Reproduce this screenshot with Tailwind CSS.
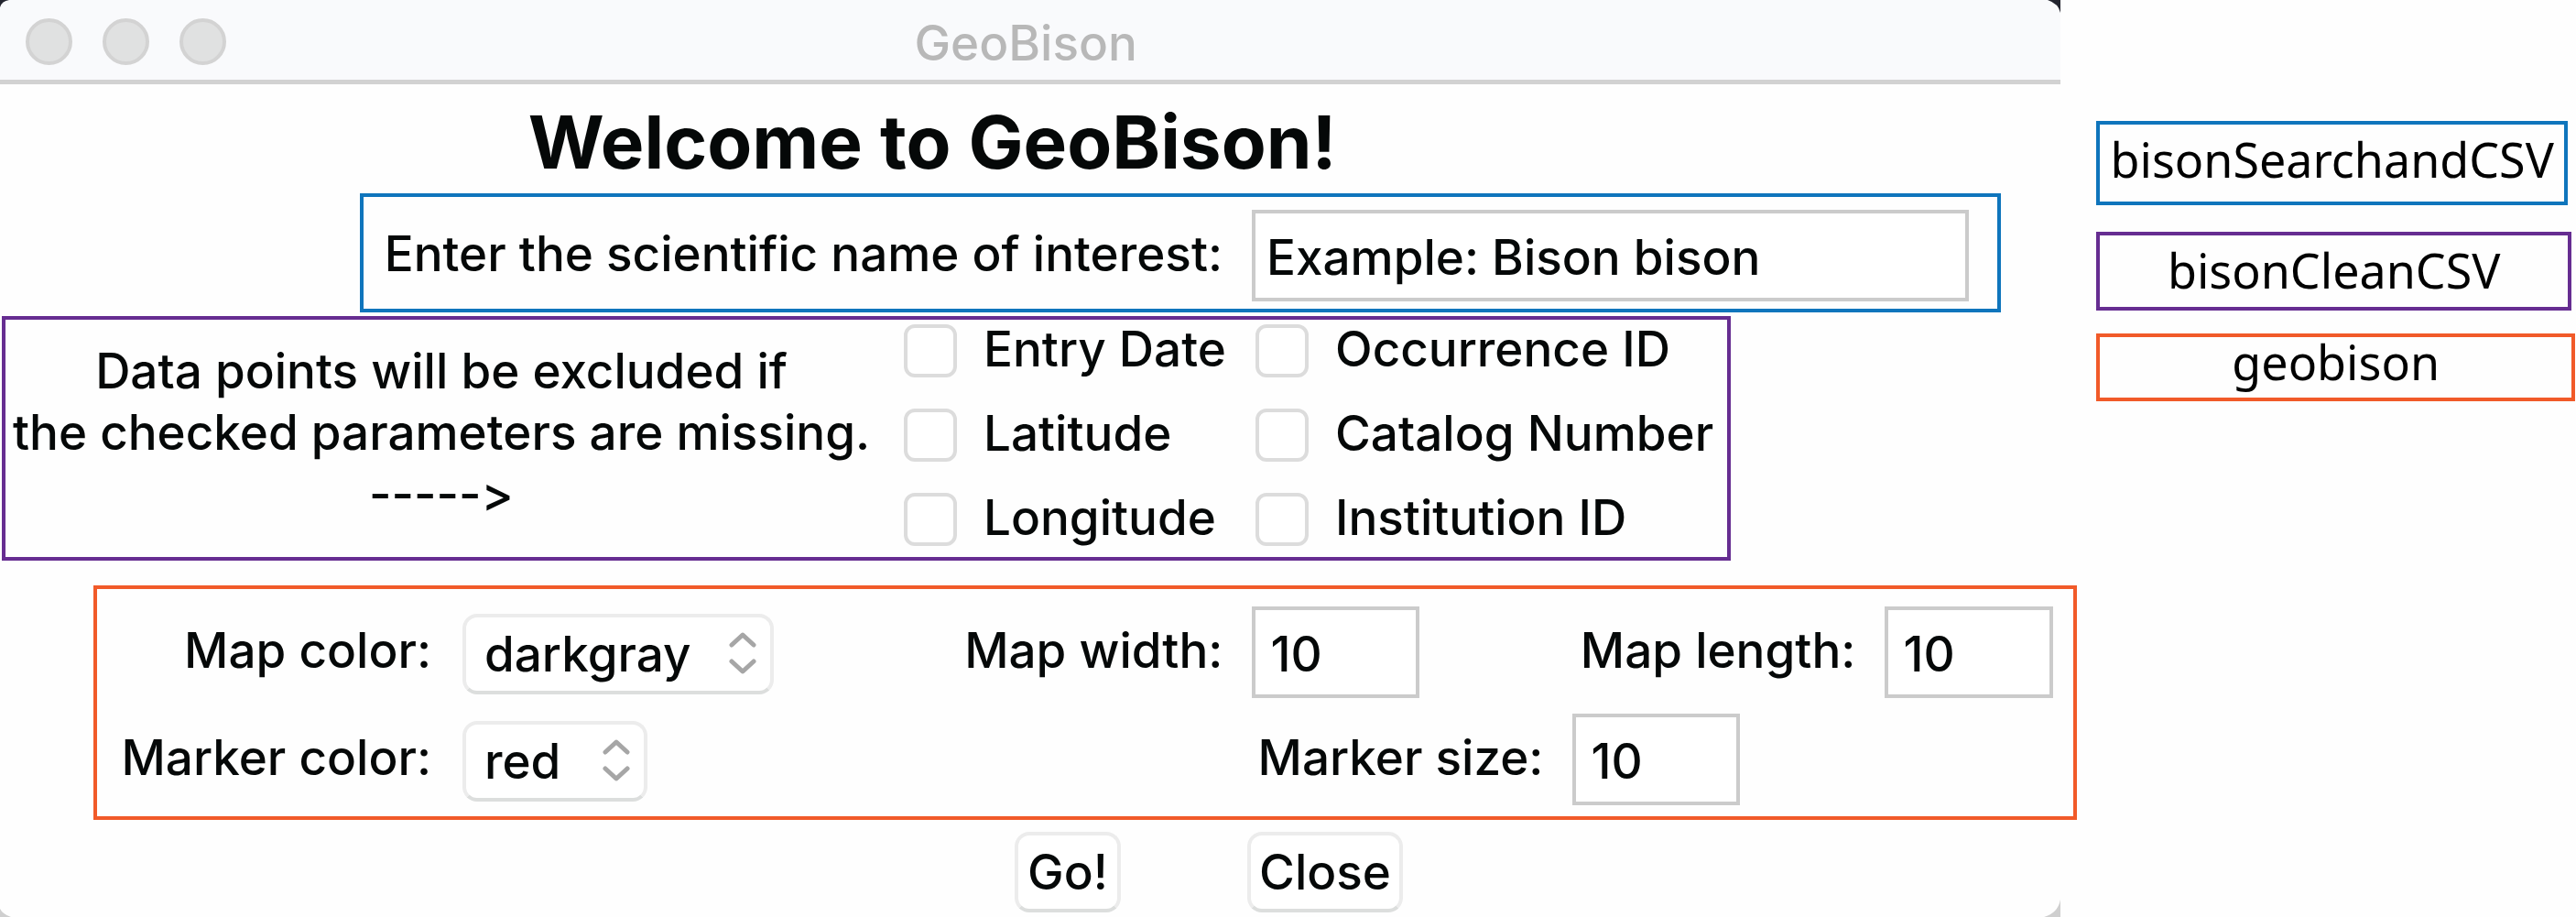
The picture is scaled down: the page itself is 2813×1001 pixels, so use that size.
<!DOCTYPE html>
<html lang="en">
<head>
<meta charset="utf-8">
<title>GeoBison</title>
<script src="https://cdn.jsdelivr.net/npm/@tailwindcss/browser@4"></script>
</head>
<body class="bg-[#fefefe] text-[#050808]">
<div class="grid min-h-screen grid-cols-[4fr_1fr] font-['Inter',sans-serif] text-[53px] [font-variant-ligatures:none]">

  <main class="relative min-w-0">
    <!-- window corners -->
    <svg class="absolute top-0 left-0 size-3" viewBox="0 0 12 12" aria-hidden="true"><path d="M0 0H10Q2 1 0 8Z" fill="#23252f"/></svg>
    <svg class="absolute top-0 right-0 size-5" viewBox="0 0 20 20" aria-hidden="true"><path d="M6 0H20V14Q18 4 6 0Z" fill="#23252f"/></svg>
    <svg class="absolute bottom-0 left-0 size-3" viewBox="0 0 12 12" aria-hidden="true"><path d="M0 3Q3 9 12 12H0Z" fill="#cfcfcf"/></svg>
    <svg class="absolute right-0 bottom-0 size-5" viewBox="0 0 20 20" aria-hidden="true"><path d="M20 1Q17 16 2 20H20Z" fill="#cfcfcf"/></svg>

    <header class="grid h-[92px] grid-cols-[1fr_auto_1fr] items-center border-b-5 border-[#d2d2d2] bg-[#f9fafc] pt-1 pr-[38px] pl-7">
      <div class="flex gap-[33px]">
        <span class="size-[51px] rounded-full border-4 border-[#d3d3d3] bg-[#e0e1e1]"></span>
        <span class="size-[51px] rounded-full border-4 border-[#d3d3d3] bg-[#e0e1e1]"></span>
        <span class="size-[51px] rounded-full border-4 border-[#d3d3d3] bg-[#e0e1e1]"></span>
      </div>
      <span class="pt-1 leading-none font-medium text-[#b8b8b8]">GeoBison</span>
    </header>

    <form class="font-medium">
      <h1 class="h-[119px] pr-[214px] text-center text-[80px] leading-[125px] font-bold">Welcome to GeoBison!</h1>

      <section class="mr-[65px] ml-[393px] flex items-start gap-8 border-4 border-[#0f75bc] pt-[14px] pr-[31px] pb-2">
        <label for="name" class="w-[938px] flex-none text-right leading-[96px]">Enter the scientific name of interest:</label>
        <input id="name" type="text" value="Example: Bison bison" class="h-[100px] min-w-0 flex-1 border-4 border-[#cbcbcb] bg-white px-3 pt-1">
      </section>

      <section class="mt-1 mr-[360px] ml-[2px] flex items-start border-4 border-[#662d91] pt-[5px] pb-3">
        <p class="w-[952px] flex-none pt-[18px] text-center leading-[67px]">Data points will be excluded if<br>the checked parameters are missing.<br>-----&gt;</p>
        <div class="ml-[29px] grid grid-cols-[384px_1fr] gap-y-[34px] leading-[54px] whitespace-nowrap">
          <label class="flex h-[58px] items-start gap-[29px]"><input type="checkbox" class="size-[58px] flex-none appearance-none rounded-xl border-4 border-[#dcdcdc] bg-white">Entry Date</label>
          <label class="flex h-[58px] items-start gap-[29px]"><input type="checkbox" class="size-[58px] flex-none appearance-none rounded-xl border-4 border-[#dcdcdc] bg-white">Occurrence ID</label>
          <label class="flex h-[58px] items-start gap-[29px]"><input type="checkbox" class="size-[58px] flex-none appearance-none rounded-xl border-4 border-[#dcdcdc] bg-white">Latitude</label>
          <label class="flex h-[58px] items-start gap-[29px]"><input type="checkbox" class="size-[58px] flex-none appearance-none rounded-xl border-4 border-[#dcdcdc] bg-white">Catalog Number</label>
          <label class="flex h-[58px] items-start gap-[29px]"><input type="checkbox" class="size-[58px] flex-none appearance-none rounded-xl border-4 border-[#dcdcdc] bg-white">Longitude</label>
          <label class="flex h-[58px] items-start gap-[29px]"><input type="checkbox" class="size-[58px] flex-none appearance-none rounded-xl border-4 border-[#dcdcdc] bg-white">Institution ID</label>
        </div>
      </section>

      <section class="mt-[27px] -mr-[18px] ml-[102px] grid gap-[17px] border-4 border-[#f15a29] pt-[19px] pr-[22px] pb-3 leading-[96px]">
        <div class="flex items-start">
          <label for="map-color" class="w-[365px] text-right">Map color:</label>
          <div class="relative mt-2 ml-[34px] leading-none">
            <select id="map-color" class="block h-[88px] w-[340px] appearance-none rounded-2xl border-4 border-[#ececec] border-b-[#dcdedd] bg-white pl-5 leading-[76px]"><option>darkgray</option></select>
            <svg class="pointer-events-none absolute top-5 right-[19px] h-[46px] w-[30px]" viewBox="0 0 30 46" fill="none" stroke="#a6a6a6" stroke-width="5" stroke-linecap="round" stroke-linejoin="round" aria-hidden="true"><path d="M3 14L15 3L27 14M3 32L15 43L27 32"/></svg>
          </div>
          <label for="map-width" class="ml-auto">Map width:</label>
          <input id="map-width" type="text" value="10" class="ml-8 h-[100px] w-[183px] border-4 border-[#cbcbcb] bg-white px-4 pt-1">
          <label for="map-length" class="w-[476px] text-right">Map length:</label>
          <input id="map-length" type="text" value="10" class="ml-8 h-[100px] w-[184px] border-4 border-[#cbcbcb] bg-white px-4 pt-1">
        </div>
        <div class="flex items-start pr-[342px]">
          <label for="marker-color" class="w-[365px] text-right">Marker color:</label>
          <div class="relative mt-2 ml-[34px] leading-none">
            <select id="marker-color" class="block h-[88px] w-[202px] appearance-none rounded-2xl border-4 border-[#ececec] border-b-[#dcdedd] bg-white pl-5 leading-[76px]"><option>red</option></select>
            <svg class="pointer-events-none absolute top-5 right-[19px] h-[46px] w-[30px]" viewBox="0 0 30 46" fill="none" stroke="#a6a6a6" stroke-width="5" stroke-linecap="round" stroke-linejoin="round" aria-hidden="true"><path d="M3 14L15 3L27 14M3 32L15 43L27 32"/></svg>
          </div>
          <label for="marker-size" class="ml-auto">Marker size:</label>
          <input id="marker-size" type="text" value="10" class="ml-8 h-[100px] w-[183px] border-4 border-[#cbcbcb] bg-white px-4 pt-1">
        </div>
      </section>

      <div class="mt-[13px] flex gap-[138px] pl-[1108px] leading-none">
        <button type="button" class="h-[88px] w-[116px] rounded-2xl border-4 border-[#ececec] border-b-[#dcdedd] bg-white">Go!</button>
        <button type="button" class="h-[88px] w-[170px] rounded-2xl border-4 border-[#ececec] border-b-[#dcdedd] bg-white">Close</button>
      </div>
    </form>
  </main>

  <aside class="min-w-0 pt-[132px] pl-[39px] text-center font-['Noto_Sans',sans-serif] text-[52px] text-black">
    <div class="mr-[9px] h-[92px] border-4 border-[#0f75bc] leading-[76px]">bisonSearchandCSV</div>
    <div class="mt-[29px] mr-[5px] h-[86px] border-4 border-[#662d91] leading-[76px]">bisonCleanCSV</div>
    <div class="mt-[25px] mr-[1px] h-[74px] border-4 border-[#f15a29] leading-[54px]">geobison</div>
  </aside>
</div>
</body>
</html>
